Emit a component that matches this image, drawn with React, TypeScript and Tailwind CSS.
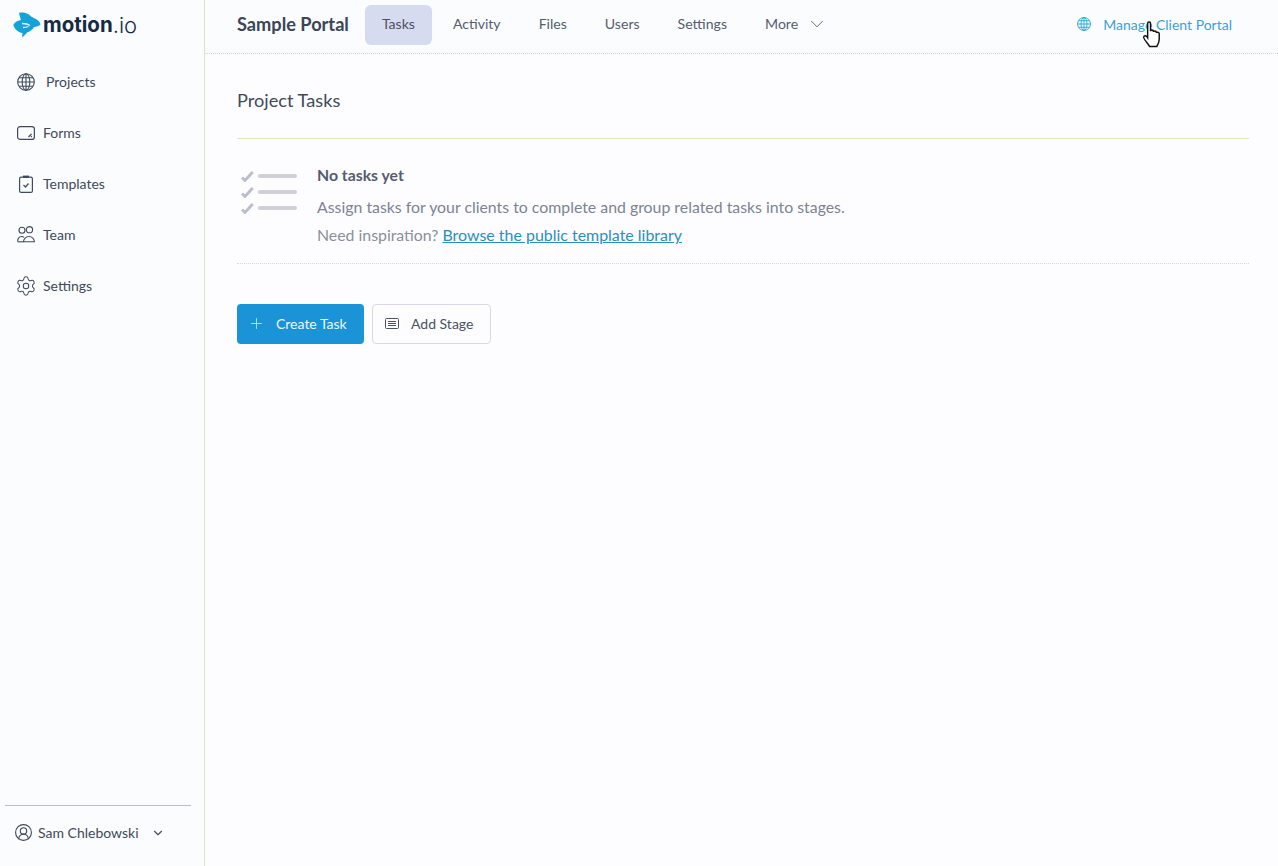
import { ChevronDown, CircleUserRound, Plus, Settings } from "lucide-react";

const font = "[font-family:Lato,'Liberation_Sans',sans-serif]";

function GlobeIcon({ size, color }: { size: number; color: string }) {
  return (
    <svg width={size} height={size} viewBox="0 0 18 18" fill="none" stroke={color} strokeWidth="1.100" className="shrink-0">
      <circle cx="9" cy="9" r="8.300" />
      <ellipse cx="9" cy="9" rx="3.800" ry="8.300" />
      <path d="M9 .7v16.600M.7 9h16.600M2 4.800h14M2 13.200h14" />
    </svg>
  );
}

function Logo() {
  return (
    <div className="flex h-[50px] items-center pl-[13px]">
      <svg width="28" height="26" viewBox="0 0 28 26" className="shrink-0">
        <path
          d="M6 .8C11-.2 15 1 17.500 4c1.500 1.500 5 2 7.500 4.500 1.500 1.500 2.500 3 2.500 4-1.500 1.500-4 2.500-6.500 2.500-1.500 3-4.500 4.500-7 5.500-1 1.500-3 3.500-5 5l.5-4.500C5 20.500 1.500 17 .3 13 1.500 10.500 4 8.500 8 8 7 5.500 6.500 3 6 .8z"
          fill="#14a3d8"
        />
        <path d="M9 11.500c3 0 6 .5 8 2M10 15.500c2 0 4-.5 5.500-1" fill="none" stroke="#dff3fb" strokeWidth="1.300" />
      </svg>
      <span className="ml-[2px] [font-family:Inter,sans-serif] text-[20.500px] leading-none font-bold text-[#152b45]">motion</span>
      <span className="[font-family:Inter,sans-serif] text-[22px] leading-none font-light text-[#152b45]">.io</span>
    </div>
  );
}

function FormsIcon() {
  return (
    <svg width="18" height="14" viewBox="0 0 18 14" fill="none" stroke="#3f4a5c" strokeWidth="1.200">
      <rect x=".6" y=".6" width="16.800" height="12.800" rx="2.500" />
      <path d="M11.500 11l3-3M14 11l.8-.8" />
    </svg>
  );
}

function TemplatesIcon() {
  return (
    <svg width="14" height="18" viewBox="0 0 14 18" fill="none" stroke="#3f4a5c" strokeWidth="1.200">
      <rect x=".6" y="2.200" width="12.800" height="15.200" rx="1.500" />
      <rect x="4" y=".6" width="6" height="2.400" fill="#3f4a5c" stroke="none" />
      <path d="M4.500 10l2 2 3-3.500" />
    </svg>
  );
}

function TeamIcon() {
  return (
    <svg width="18" height="17" viewBox="0 0 18 17" fill="none" stroke="#3f4a5c" strokeWidth="1.100">
      <circle cx="5" cy="4.200" r="3" />
      <circle cx="12.500" cy="3.700" r="3.100" />
      <path d="M.6 15.500c0-3 1.600-5 4-5 1 0 1.800.3 2.400.8M6.500 15.800c0-3 2.500-5.300 5.500-5.300s5.400 2.300 5.400 5.300z" />
      <path d="M.6 15.800h5.900" />
    </svg>
  );
}

function SideItem({ icon, label, gap }: { icon: React.ReactNode; label: string; gap: string }) {
  return (
    <div className="flex h-[51px] items-center pl-[17px] text-[14px] text-[#3f4a5a]">
      <span className={`flex w-[18px] shrink-0 justify-center ${gap}`}>{icon}</span>
      {label}
    </div>
  );
}

function Sidebar() {
  return (
    <aside className="flex h-full w-[205px] shrink-0 flex-col border-r border-[#dfe3c4] bg-[#fbfcfe]">
      <Logo />
      <nav className="mt-[6px] flex flex-col">
        <SideItem icon={<GlobeIcon size={18} color="#3f4a5c" />} label="Projects" gap="mr-[11px]" />
        <SideItem icon={<FormsIcon />} label="Forms" gap="mr-2" />
        <SideItem icon={<TemplatesIcon />} label="Templates" gap="mr-2" />
        <SideItem icon={<TeamIcon />} label="Team" gap="mr-2" />
        <SideItem icon={<Settings size={22} strokeWidth={1.100} color="#3f4a5c" className="shrink-0" />} label="Settings" gap="mr-2" />
      </nav>
      <div className="mx-[5px] mt-auto mr-[13px] flex h-[61px] items-center border-t border-[#bdbdc4] pb-[7px] pl-[9px] text-[14px] text-[#3f4a5a]">
        <CircleUserRound size={19} strokeWidth={1.400} color="#3f4a5c" className="mr-[5px]" />
        Sam Chlebowski
        <ChevronDown size={14} strokeWidth={2} color="#46505f" className="ml-[12px]" />
      </div>
    </aside>
  );
}

function Tab({ label, active }: { label: string; active?: boolean }) {
  return (
    <div
      className={`flex h-10 items-center rounded-md px-[17px] pb-[2px] text-[14.100px] ${active ? "w-[67px] bg-[#d7dbef] text-[#4a5165]" : "text-[#555e6e]"}`}
    >
      {label}
    </div>
  );
}

function Header() {
  return (
    <header className="relative flex h-[54px] shrink-0 items-center border-b border-dotted border-[#d2d3ea] bg-[#fbfcfe] pr-[46px] pb-[3px] pl-8">
      <h1 className="mr-4 text-[18.200px] font-bold text-[#3a4557]">Sample Portal</h1>
      <div className="flex gap-1">
        <Tab label="Tasks" active />
        <Tab label="Activity" />
        <Tab label="Files" />
        <Tab label="Users" />
        <Tab label="Settings" />
        <div className="flex h-10 items-center pb-[2px] pl-[17px] text-[14.100px] text-[#555e6e]">
          More
          <ChevronDown size={22} strokeWidth={1} className="ml-[8px]" />
        </div>
      </div>
      <div className="ml-auto flex items-center pb-[2px] text-[14px] text-[#3f9fd8]">
        <GlobeIcon size={14} color="#1ba6c9" />
        <span className="ml-3">Manage Client Portal</span>
      </div>
      <svg width="19" height="27" viewBox="0 0 18 28" className="absolute top-[21px] left-[937px]">
        <path
          d="M5 2.500c0-2 3-2 3 0v8c0-1.500 3-1.500 3 0v1c0-1.500 3-1.500 3 0v1c0-1.300 3-1 3 .5v6c0 3.500-1.500 5-2.500 7.500H7c-1-2.500-5-6-6-9-.5-2 1.500-3 3-1.500l1 1.500z"
          fill="#fff"
          stroke="#111"
          strokeWidth="1.500"
        />
      </svg>
    </header>
  );
}

function EmptyIcon() {
  return (
    <div className="flex w-[56px] flex-col gap-[6px] text-[#bcbfca]">
      {[0, 1, 2].map((i) => (
        <div key={i} className="flex h-[10px] items-center gap-[4px]">
          <svg width="13" height="11" viewBox="0 0 13 11" fill="none" stroke="currentColor" strokeWidth="3">
            <path d="M1 6.500l3 3L12 1" />
          </svg>
          <span className="h-[4px] w-[40px] rounded-full bg-[#cfd0d8]" />
        </div>
      ))}
    </div>
  );
}

function Main() {
  return (
    <main className="flex-1 pt-[33px] pr-[29px] pl-8">
      <h2 className="text-[18.200px] leading-[26px] text-[#3f4a5b]">Project Tasks</h2>
      <div className="mt-[25px] border-t border-[#e2e5c0]" />
      <div className="flex border-b border-dotted border-[#d5d6e3] pt-[26px] pb-[18px]">
        <div className="pt-[6px] pl-1">
          <EmptyIcon />
        </div>
        <div className="ml-5">
          <p className="text-[15.800px] leading-[20px] font-bold text-[#555c6e]">No tasks yet</p>
          <p className="mt-[12px] text-[15.850px] leading-[20px] text-[#7c8394]">
            Assign tasks for your clients to complete and group related tasks into stages.
          </p>
          <p className="mt-2 text-[15.850px] leading-[20px] text-[#8a8f9c]">
            Need inspiration? <span className="text-[15.950px] text-[#2a8fbe] underline">Browse the public template library</span>
          </p>
        </div>
      </div>
      <div className="mt-10 flex gap-2">
        <button className="flex h-10 w-[127px] items-center rounded bg-[#1a94d6] pb-[2px] pl-[11px] text-[14px] text-[#eef7fc]">
          <Plus size={17} strokeWidth={1.300} color="#b9def3" className="mr-[11px]" />
          Create Task
        </button>
        <button className="flex h-10 w-[119px] items-center rounded border border-[#d8d8e8] pb-[2px] pl-[12px] text-[14px] text-[#4a5262]">
          <svg width="14" height="11" viewBox="0 0 14 11" fill="none" stroke="#4a5262" strokeWidth="1" className="mr-[12px]">
            <rect x=".5" y=".5" width="13" height="10" rx="1" />
            <path d="M3 3.500h8M3 5.500h8M3 7.500h8" />
          </svg>
          Add Stage
        </button>
      </div>
    </main>
  );
}

export default function App() {
  return (
    <div className={`flex h-[866px] bg-[#fdfdff] ${font}`}>
      <Sidebar />
      <div className="flex min-w-0 flex-1 flex-col">
        <Header />
        <Main />
      </div>
    </div>
  );
}
